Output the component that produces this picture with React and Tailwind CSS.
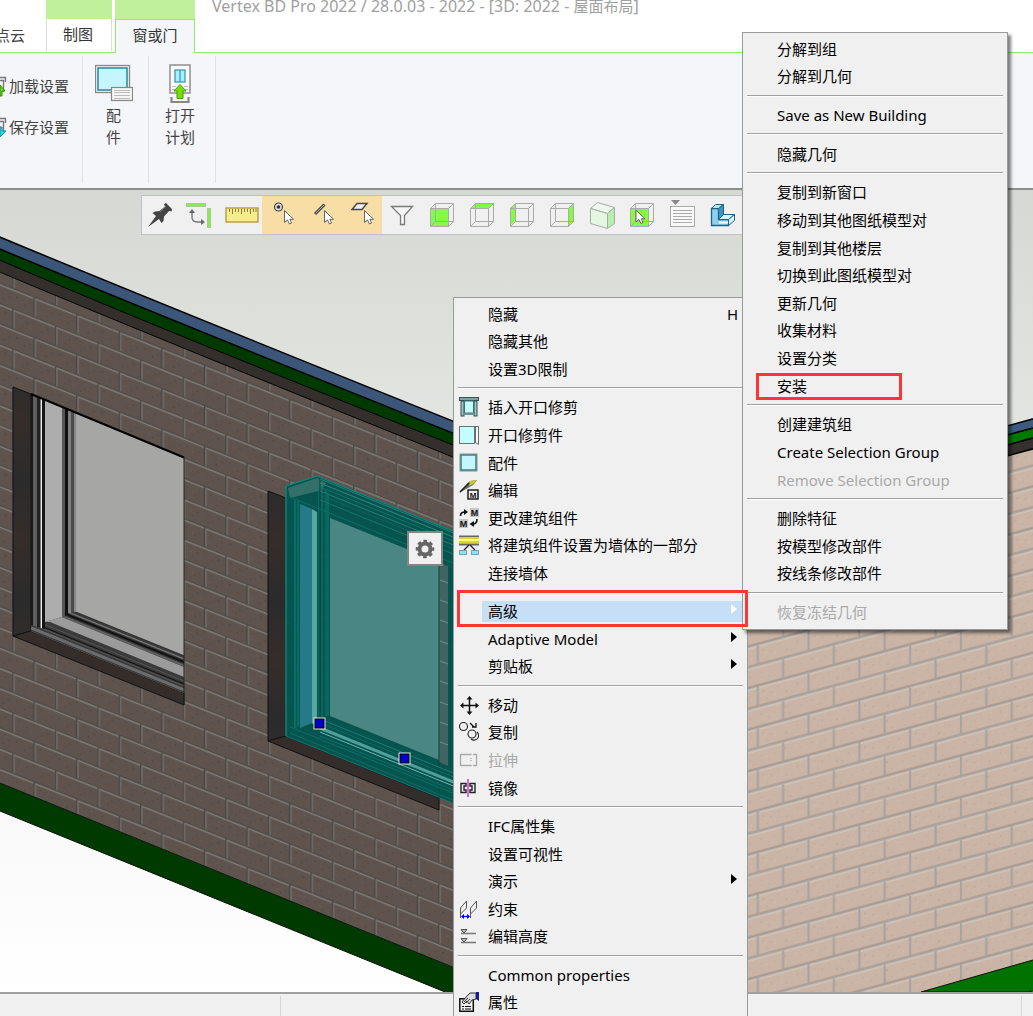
import React from 'react';
import clsx from 'clsx';

/* ---------- context menu icons, 20x20 ---------- */

const svg20 = { width: 20, height: 20, viewBox: '0 0 20 20', fill: 'none', 'aria-hidden': true };

const InsertTrimIcon = () => (
  <svg {...svg20}>
    <rect x="0.5" y="0.5" width="19" height="3" fill="#7fa3a3" stroke="#3d5353" />
    <rect x="2" y="4" width="3" height="15" fill="#9fc4c4" stroke="#2f4f4f" />
    <rect x="15" y="4" width="3" height="15" fill="#9fc4c4" stroke="#2f4f4f" />
    <rect x="5.5" y="4" width="9" height="12" fill="#c3fdff" stroke="#447070" />
    <rect x="5" y="16" width="10" height="2" fill="#6d9292" />
  </svg>
);

const TrimPartIcon = () => (
  <svg {...svg20}>
    <rect x="0.5" y="1.5" width="15" height="17" fill="#c3fdff" stroke="#6b7474" />
    <path d="M15.500 1.500H19.500V19.500L16.500 17.500V1.500" fill="#f8f8f8" stroke="#6b6b6b" />
  </svg>
);

const FittingIcon = () => (
  <svg {...svg20}>
    <rect x="1" y="1" width="17" height="17" fill="#c5f5ff" stroke="#7d9a9c" />
    <rect x="2" y="2" width="15" height="15" stroke="#3f7377" strokeWidth="1.4" />
  </svg>
);

const EditIcon = () => (
  <svg {...svg20}>
    <path d="M0 13L8 4L11 1L18 0L14 5L9 8Z" fill="#6e6e5c" />
    <path d="M11 1L18 0L14 4L10 6Z" fill="#c8c832" />
    <path d="M1 12L10 3" stroke="#222" strokeWidth="1.600" />
    <rect x="9" y="10" width="10" height="9" fill="#eee" stroke="#111" strokeWidth="1.400" />
    <text x="14" y="17.500" textAnchor="middle" fontSize="8" fontWeight="700" fontFamily="Liberation Sans, sans-serif" fill="#111">M</text>
  </svg>
);

const ChangeIcon = () => (
  <svg {...svg20}>
    <rect x="11" y="0" width="9" height="9" fill="#c6c6c6" />
    <rect x="0" y="11" width="9" height="9" fill="#c6c6c6" />
    <g fontSize="9" fontWeight="700" fontFamily="Liberation Sans, sans-serif" fill="#111" textAnchor="middle">
      <text x="15.500" y="7.500">M</text>
      <text x="4.500" y="18.500">M</text>
    </g>
    <path d="M1.500 8C1.500 5 3 4 6 4" stroke="#111" strokeWidth="1.600" />
    <path d="M5 1L9 4L5 7Z" fill="#111" />
    <path d="M18 11C18 14 17 16 14 16" stroke="#111" strokeWidth="1.600" />
    <path d="M15 13L10.500 16L15 19Z" fill="#111" />
  </svg>
);

const WallPartIcon = () => (
  <svg {...svg20}>
    <path d="M0 1.500H20M0 9.500H20" stroke="#666" strokeWidth="2" />
    <rect y="2" width="20" height="6" fill="#d8d43c" />
    <rect y="4" width="20" height="2" fill="#ffff6e" />
    <path d="M10 10L5 15M11 10L16 15" stroke="#222" strokeWidth="1.300" />
    <rect x="0.500" y="15.500" width="7" height="4" fill="#86e4f2" stroke="#6ba7b1" />
    <rect x="12.500" y="15.500" width="7" height="4" fill="#86e4f2" stroke="#6ba7b1" />
  </svg>
);

const MoveIcon = () => (
  <svg {...svg20}>
    <path d="M10.500 3V17M3 10.500H18" stroke="#111" strokeWidth="1.500" />
    <path d="M10.500 1L13.500 4.500H7.500ZM10.500 20L13.500 16.500H7.500ZM1 10.500L4.500 7.500V13.500ZM20 10.500L16.500 7.500V13.500Z" fill="#111" />
  </svg>
);

const CopyIcon = () => (
  <svg {...svg20}>
    <circle cx="4.500" cy="4.500" r="4" stroke="#222" strokeWidth="1.100" />
    <circle cx="13" cy="12" r="4" stroke="#222" strokeWidth="1.100" />
    <path d="M18 10A4.300 4.300 0 1 1 12 17" stroke="#222" strokeWidth="1.100" />
    <path d="M11 1L15 5M13 5H17V1" stroke="#111" strokeWidth="1.300" />
  </svg>
);

const StretchIcon = () => (
  <svg {...svg20}>
    <path d="M12 5V4.500H1.500V15.500H12V15" stroke="#aaa" strokeWidth="1.300" />
    <path d="M12 8V12" stroke="#aaa" strokeWidth="1.300" strokeDasharray="1 1" />
    <path d="M14 4.500H17.500V15.500H14" stroke="#aaa" strokeWidth="1.300" />
  </svg>
);

const MirrorIcon = () => (
  <svg {...svg20}>
    <path d="M7 5.500H2V14.500H7V12H5V8H7Z" stroke="#222" strokeWidth="1.400" />
    <path d="M11 5.500H16V14.500H11V12H13V8H11Z" stroke="#222" strokeWidth="1.400" />
    <path d="M9 1V19" stroke="#d61bd6" strokeWidth="1.300" />
  </svg>
);

const ConstraintIcon = () => (
  <svg {...svg20}>
    <path d="M1.500 9L7.500 2V9L1.500 15ZM11.500 9L17.500 2V9L11.500 15Z" stroke="#555" />
    <path d="M1.500 15V19M11.500 15V19" stroke="#555" />
    <path d="M3 17.500H10" stroke="#00f" strokeWidth="1.200" />
    <path d="M2 17.500L5 15V20ZM11 17.500L8 15V20Z" fill="#00f" />
  </svg>
);

const HeightIcon = () => (
  <svg {...svg20}>
    <path d="M2 7.500H17M2 16.500H17" stroke="#777" strokeWidth="1.400" />
    <path d="M2 3.500H8L5 7ZM2 12.500H8L5 16Z" stroke="#555" fill="#bbb" />
  </svg>
);

const PropertiesIcon = () => (
  <svg {...svg20}>
    <rect x="0.800" y="6.800" width="13.500" height="12.500" fill="#eee" stroke="#111" strokeWidth="1.500" />
    <path d="M3 14.500H5M6 14.500H12M3 17H5M6 17H12" stroke="#111" />
    <path d="M3 10L8 4L11 1H17V7L13 8L10 12L8 9L5 12Z" fill="#ddd" stroke="#333" />
    <path d="M5 10L9 6M7 11L11 7" stroke="#333" />
    <path d="M17 0H20V9L17 7Z" fill="#1a1a8c" />
  </svg>
);

const contextItems = [
  { label: '隐藏', shortcut: 'H' },
  { label: '隐藏其他' },
  { label: '设置3D限制' },
  null,
  { label: '插入开口修剪', Icon: InsertTrimIcon },
  { label: '开口修剪件', Icon: TrimPartIcon },
  { label: '配件', Icon: FittingIcon },
  { label: '编辑', Icon: EditIcon },
  { label: '更改建筑组件', Icon: ChangeIcon },
  { label: '将建筑组件设置为墙体的一部分', Icon: WallPartIcon },
  { label: '连接墙体' },
  null,
  { label: '高级', submenu: true, active: true },
  { label: 'Adaptive Model', submenu: true },
  { label: '剪贴板', submenu: true },
  null,
  { label: '移动', Icon: MoveIcon },
  { label: '复制', Icon: CopyIcon },
  { label: '拉伸', Icon: StretchIcon, disabled: true },
  { label: '镜像', Icon: MirrorIcon },
  null,
  { label: 'IFC属性集' },
  { label: '设置可视性' },
  { label: '演示', submenu: true },
  { label: '约束', Icon: ConstraintIcon },
  { label: '编辑高度', Icon: HeightIcon },
  null,
  { label: 'Common properties' },
  { label: '属性', Icon: PropertiesIcon },
];

const advancedItems = [
  { label: '分解到组' },
  { label: '分解到几何' },
  null,
  { label: 'Save as New Building' },
  null,
  { label: '隐藏几何' },
  null,
  { label: '复制到新窗口' },
  { label: '移动到其他图纸模型对' },
  { label: '复制到其他楼层' },
  { label: '切换到此图纸模型对' },
  { label: '更新几何' },
  { label: '收集材料' },
  { label: '设置分类' },
  { label: '安装' },
  null,
  { label: '创建建筑组' },
  { label: 'Create Selection Group' },
  { label: 'Remove Selection Group', disabled: true },
  null,
  { label: '删除特征' },
  { label: '按模型修改部件' },
  { label: '按线条修改部件' },
  null,
  { label: '恢复冻结几何', disabled: true },
];

function Separator() {
  return (
    <li role="separator" className="flex h-[11px] shrink-0 items-center px-1">
      <span className="h-[2px] w-full border-t border-[#a0a0a0] bg-white" />
    </li>
  );
}

function MenuItem({ item }) {
  const { label, Icon, shortcut, submenu, active, disabled } = item;
  return (
    <li role="none" className="min-h-0 flex-1">
      <button
        role="menuitem"
        disabled={disabled}
        className={clsx('flex h-full w-full items-center pl-[5px] text-left', disabled ? 'text-[#a9a9a9]' : 'text-black')}
      >
        <span className="w-5 shrink-0">{Icon && <Icon />}</span>
        <span className={clsx('ml-[3px] flex h-[21px] flex-1 items-center pl-[6px] pr-[9px]', active && 'bg-[#c5dff7]')}>
          <span className="flex-1 whitespace-nowrap">{label}</span>
          {shortcut && <span>{shortcut}</span>}
          {submenu && (
            <svg width="7" height="14" viewBox="0 0 7 14" aria-hidden="true">
              <path d="M0 0L6 5L0 10Z" fill={active ? '#fff' : '#000'} />
            </svg>
          )}
        </span>
      </button>
    </li>
  );
}

function ContextMenu() {
  return (
    <div className="absolute left-[453px] top-[297px] w-[295px] border border-[#9a9a9a] bg-[#f0f0f0] pt-[2px]">
      <ul role="menu" className="flex h-[716px] flex-col">
        {contextItems.map((item, i) => (item ? <MenuItem key={item.label} item={item} /> : <Separator key={i} />))}
      </ul>
    </div>
  );
}

function AdvancedMenu() {
  return (
    <div className="absolute left-[742px] top-[32px] w-[266px] border border-[#9a9a9a] bg-[#f0f0f0] pt-[2px] pb-[3px] shadow-[3px_3px_3px_rgba(0,0,0,0.5)]">
      <ul role="menu" className="flex h-[591px] flex-col">
        {advancedItems.map((item, i) => (item ? <MenuItem key={item.label} item={item} /> : <Separator key={i} />))}
      </ul>
    </div>
  );
}

/* ---------- floating view toolbar ---------- */

const svg32 = { width: 32, height: 32, viewBox: '0 0 32 32', fill: 'none', 'aria-hidden': true };

const Cursor = ({ x, y }) => (
  <path
    transform={`translate(${x} ${y})`}
    d="M0 0V12L3 9.500L5 13.500L7 12.500L5.300 8.800H9Z"
    fill="#fff"
    stroke="#666"
  />
);

const PinIcon = () => (
  <svg {...svg32}>
    <path d="M2 29L10 18L6.500 15L9 13.500L13.500 13L19 8.500L18 6L20 5L26 11L25.500 13.500L23 13L18 18.500L17.500 23L15.500 25L13 21Z" fill="#444" />
    <path d="M20 8L14 14" stroke="#777" />
  </svg>
);

const AxesIcon = () => (
  <svg {...svg32}>
    <rect x="0.500" y="5.500" width="19" height="3" fill="#84f04a" stroke="#a9c79b" />
    <rect x="21.500" y="10.500" width="3" height="19" fill="#84f04a" stroke="#a9c79b" />
    <path d="M6 14V19C6 22 8 24 11 24H15" stroke="#777" strokeWidth="1.400" />
    <path d="M6 11L9 15H3ZM19 24L15 21V27Z" fill="#666" />
  </svg>
);

const RulerIcon = () => (
  <svg width="34" height="32" viewBox="0 0 34 32" fill="none" aria-hidden="true">
    <rect x="1" y="10" width="32" height="14" fill="#f6ee8b" stroke="#b39339" strokeWidth="1.300" />
    <path d="M4.500 11V14M7.500 11V16M10.500 11V14M13.500 11V14M16.500 11V16M19.500 11V14M22.500 11V14M25.500 11V16M28.500 11V14M31 11V14" stroke="#8c7a3a" />
  </svg>
);

const SnapPointIcon = () => (
  <svg {...svg32}>
    <circle cx="12.500" cy="9" r="4" fill="#ddd" stroke="#444" strokeWidth="1.200" />
    <circle cx="12.500" cy="9" r="1.800" fill="#333" />
    <Cursor x={18.5} y={12.5} />
  </svg>
);

const SnapLineIcon = () => (
  <svg {...svg32}>
    <path d="M9 16L18.500 6.500" stroke="#444" strokeWidth="3" />
    <path d="M9.500 15.500L18 7" stroke="#bbb" />
    <Cursor x={18.5} y={12.5} />
  </svg>
);

const SnapPlaneIcon = () => (
  <svg {...svg32}>
    <path d="M6 11.500L11 5.500H21L16 11.500Z" fill="#f2f2f2" stroke="#444" strokeWidth="1.400" />
    <Cursor x={18.5} y={12.5} />
  </svg>
);

const FilterIcon = () => (
  <svg {...svg32}>
    <path d="M5.500 8.500H26.500L18.500 17.500V26.500H14.500V17.500Z" fill="#f6f6f6" stroke="#7a7a7a" strokeWidth="1.300" />
  </svg>
);

const cubeFaces = {
  front: 'M5 11H23V28H5Z',
  top: 'M5 10L10 5H28L23 10Z',
  left: 'M4 10L9 6V23L4 28Z',
  right: 'M23 10L28 6V23L23 28Z',
};

function CubeIcon({ face, cursor }) {
  return (
    <svg {...svg32}>
      <path d={cubeFaces[face]} fill="#84fb40" />
      <path d="M4.500 10.500H22.500V28.500H4.500ZM9.500 5.500H27.500V23.500H9.500ZM4.500 10.500L9.500 5.500M22.500 10.500L27.500 5.500M22.500 28.500L27.500 23.500M4.500 28.500L9.500 23.500" stroke="#aaa" />
      {cursor && <Cursor x={10} y={12} />}
    </svg>
  );
}

const FrontCube = () => <CubeIcon face="front" />;
const TopCube = () => <CubeIcon face="top" />;
const LeftCube = () => <CubeIcon face="left" />;
const RightCube = () => <CubeIcon face="right" />;
const PickCube = () => <CubeIcon face="front" cursor />;

const IsoCube = () => (
  <svg {...svg32}>
    <path d="M4.500 10.500L11.500 4.500L28.500 9.500L21.500 15.500Z" fill="#eef8ec" stroke="#aaa" />
    <path d="M4.500 10.500L21.500 15.500V30.500L4.500 25.500Z" fill="#e4f7e0" stroke="#aaa" />
    <path d="M21.500 15.500L28.500 9.500V25.500L21.500 30.500Z" fill="#b7f0ac" stroke="#aaa" />
  </svg>
);

const ListIcon = () => (
  <svg {...svg32}>
    <path d="M5 2H14L9.500 7Z" fill="#888" />
    <rect x="4.500" y="8.500" width="24" height="20" fill="#f8f8f8" stroke="#aaa" />
    <path d="M7 12.500H26M7 15.500H26M7 18.500H26M7 21.500H26M7 24.500H26" stroke="#aaa" />
  </svg>
);

const ShapeIcon = () => (
  <svg {...svg32}>
    <path d="M5.500 10.500H12.500V21.500H22.500V27.500H5.500Z" fill="#8fd0ee" stroke="#1f6285" strokeWidth="1.300" />
    <path d="M5.500 10.500L9.500 6.500H17.500L12.500 10.500Z" fill="#b8e4f6" stroke="#1f6285" />
    <path d="M12.500 10.500L17.500 6.500V17.500L12.500 21.500Z" fill="#3f94bd" stroke="#1f6285" />
    <path d="M12.500 21.500L17.500 16.500H28.500L22.500 21.500Z" fill="#d8f1fb" stroke="#1f6285" />
    <path d="M22.500 21.500L28.500 16.500V22.500L22.500 27.500Z" fill="#d8f1fb" stroke="#1f6285" />
    <path d="M13 24.500H22" stroke="#fff" strokeWidth="2" />
  </svg>
);

const viewTools = [
  { name: 'Pin', Icon: PinIcon },
  { name: 'Axes', Icon: AxesIcon },
  { name: 'Measure', Icon: RulerIcon },
  { name: 'Point', Icon: SnapPointIcon, on: true },
  { name: 'Line', Icon: SnapLineIcon, on: true },
  { name: 'Plane', Icon: SnapPlaneIcon, on: true },
  { name: 'Filter', Icon: FilterIcon },
  { name: 'Front', Icon: FrontCube },
  { name: 'Top', Icon: TopCube },
  { name: 'Left', Icon: LeftCube },
  { name: 'Right', Icon: RightCube },
  { name: 'Isometric', Icon: IsoCube },
  { name: 'Pick face', Icon: PickCube },
  { name: 'List', Icon: ListIcon },
  { name: 'Solid', Icon: ShapeIcon },
];

function ViewToolbar() {
  return (
    <div className="absolute left-[141px] top-[5px] flex h-10 border border-[#bfc1c4] bg-[#f0f0f0]">
      {viewTools.map(({ name, Icon, on }) => (
        <button key={name} aria-label={name} className={clsx('flex w-10 items-center justify-center pb-[2px]', on && 'bg-[#f8dda4]')}>
          <Icon />
        </button>
      ))}
    </div>
  );
}

/* ---------- 3D view ---------- */

// One stripe per line, all running parallel between two x positions
function Stripes({ lines, x1, x2, slope }) {
  return lines.map(([y, color, w]) => (
    <path key={y} d={`M${x1} ${y}L${x2} ${y + (x2 - x1) * slope}`} stroke={color} strokeWidth={w} />
  ));
}

function Posts({ posts, y1, y2, slope }) {
  return posts.map(([x, w, color]) => {
    const d = (x - posts[0][0]) * slope;
    const e = d + w * slope;
    return <path key={x} d={`M${x} ${y1 + d}L${x + w} ${y1 + e}V${y2 + e}L${x} ${y2 + d}Z`} fill={color} />;
  });
}

function Scene() {
  return (
    <svg className="absolute inset-0 h-full w-full" viewBox="0 190 1033 802" preserveAspectRatio="xMinYMin slice" fill="none" aria-hidden="true">
      <defs>
        <linearGradient id="sky" x1="0" y1="0" x2="0" y2="1">
          <stop offset="0" stopColor="#d6d8d3" />
          <stop offset="0.250" stopColor="#e1e3df" />
          <stop offset="0.800" stopColor="#f9f9f9" />
          <stop offset="1" stopColor="#fff" />
        </linearGradient>
        <linearGradient id="reveal" x1="0" y1="0" x2="0" y2="60" gradientUnits="userSpaceOnUse" spreadMethod="reflect">
          <stop offset="0" stopColor="#2b2b2b" />
          <stop offset="1" stopColor="#352d29" />
        </linearGradient>
        <pattern id="darkBrick" width="42.600" height="40.400" patternUnits="userSpaceOnUse" patternTransform="matrix(1 0.400 0 1 12.300 308)">
          <rect width="42.600" height="40.400" fill="#5e534d" />
          <path d="M6 6h1M14 9h1.500M21 5h1M29 12h1M35 8h1.500M10 14h1M25 15h1M4 28h1.500M12 33h1M28 27h1M33 35h1.500M39 30h1M17 29h1" stroke="#4c433e" />
          <path d="M8 10h1M18 13h1M31 6h1M9 31h1M26 34h1M36 27h1" stroke="#6c615a" />
          <path d="M0 0.700H42.600M0 20.900H42.600" stroke="#4d4a47" strokeWidth="2" />
          <path d="M0 2H42.600M0 22.200H42.600" stroke="#857e79" strokeWidth="1.300" />
          <path d="M0.600 1V20M21.900 21V40" stroke="#484644" strokeWidth="1.600" />
          <path d="M1.900 2V20M23.200 22V40" stroke="#77716c" strokeWidth="1.200" />
        </pattern>
        <pattern id="lightBrick" width="50.800" height="41.600" patternUnits="userSpaceOnUse" patternTransform="matrix(1 -0.270 0 1 756.700 894.300)">
          <rect width="50.800" height="41.600" fill="#c9b4a6" />
          <path d="M6 7h1.500M14 10h1.500M21 6h1M29 13h1.500M40 8h1.500M10 15h1M35 15h1M4 29h1.500M12 34h1M28 28h1.500M33 36h1.500M44 31h1M17 30h1" stroke="#b7a193" />
          <path d="M8 10h1M18 13h1M31 6h1M45 13h1M9 31h1M26 34h1M39 28h1" stroke="#d8c6ba" />
          <path d="M0 40.800H50.800M0 20H50.800" stroke="#9b8e86" strokeWidth="1.200" />
          <path d="M0 0.500H50.800M0 21.300H50.800" stroke="#aeaaa5" strokeWidth="1.800" />
          <path d="M0 2H50.800M0 22.800H50.800" stroke="#dccfc5" />
          <path d="M1 1V20M26.400 22V41" stroke="#a8a39f" strokeWidth="2.200" />
        </pattern>
      </defs>

      <rect y="190" width="1033" height="802" fill="url(#sky)" />

      {/* left wall with fascia and roof edge */}
      <path d="M-5 270L600 516V1027L-5 781Z" fill="url(#darkBrick)" />
      <path d="M-5 781L600 1027V1055L-5 809Z" fill="#003a00" stroke="#0b120b" />
      <path d="M-5 258Q170 332 600 502V516Q170 344 -5 270Z" fill="#352f2c" stroke="#000" />
      <path d="M-5 247Q170 319 600 492V503Q170 334 -5 258Z" fill="#003a00" stroke="#000" />
      <path d="M-5 235Q170 308 600 480V492Q170 320 -5 247Z" fill="#3c5679" stroke="#000" strokeWidth="1.500" />

      {/* right wall */}
      <path d="M748 529L1040 447V992H748Z" fill="url(#lightBrick)" />
      <path d="M921 992L1040 958V990L1027 992Z" fill="#007200" stroke="#111" />
      <path d="M748 526L1040 447V436L748 515Z" fill="#352f2d" stroke="#000" strokeWidth="1.500" />
      <path d="M748 515L1040 436V426L748 506Z" fill="#007800" stroke="#000" strokeWidth="1.500" />
      <path d="M748 506L1040 426V417L748 496Z" fill="#3e5a80" stroke="#000" strokeWidth="1.500" />

      {/* plain window */}
      <path d="M13 387L31 394V631L13 636Z" fill="url(#reveal)" stroke="#111" />
      <path d="M13 636L31 631L184 693V705Z" fill="#352d29" stroke="#111" />
      <path d="M31 394L184 457V693L31 631Z" fill="#a6a6a4" />
      <clipPath id="opening1">
        <path d="M31 394L184 457V693L31 631Z" />
      </clipPath>
      <g clipPath="url(#opening1)">
        <path d="M31 594L184 656V700L31 632Z" fill="#3a3a3a" />
        <path d="M45 622L62 617L184 667V677L50 622Z" fill="#9b9b9b" />
        <Stripes
          x1={31}
          x2={184}
          slope={0.405}
          lines={[
            [594, '#333', 1.2],
            [597, '#777', 1.2],
            [600, '#111', 2],
            [603.5, '#606060', 2],
            [619, '#555', 1],
            [622, '#111', 1],
            [624, '#555', 1],
            [628, '#6c6c6c', 3],
          ]}
        />
        <Posts
          y1={380}
          y2={625}
          slope={0.3}
          posts={[
            [31, 2, '#1a1a1a'],
            [33, 4, '#5e5e5e'],
            [37, 3, '#222'],
            [40, 1, '#777'],
            [41, 1, '#eee'],
            [42, 3, '#151515'],
          ]}
        />
        <path d="M45 380H62V617L45 622Z" fill="#adadad" />
        <path d="M62 380H65V617H62Z" fill="#555" />
        <path d="M65 380H68V614L65 616Z" fill="#111" />
        <path d="M68 380H71V613H68Z" fill="#808080" />
        <path d="M71 380H74V612H71Z" fill="#4b4b4b" />
        <path d="M74 380H76V612H74Z" fill="#868686" />
      </g>
      <path d="M31 394L184 457.500" stroke="#000" strokeWidth="2" />
      <path d="M184 457V705" stroke="#222" />

      {/* selected window */}
      <path d="M268 491L286 498V736L268 741Z" fill="url(#reveal)" stroke="#111" />
      <path d="M268 741L286 736L439 798V810Z" fill="#352d29" stroke="#111" />
      <path d="M286 486L317 476L560 574V846L286 736Z" fill="#00544f" fillOpacity="0.940" stroke="#127872" />
      <path d="M288 488L317 478L326 483L322 490L290 498Z" fill="#33706b" />
      <path d="M300 504L312 509V723L300 728Z" fill="#257a88" />
      <path d="M312 509L317 512V722L312 724Z" fill="#58a5a1" />
      <path d="M330 518L439 562V760L330 716Z" fill="#4a8683" />
      <path d="M439 562L448 566V766L439 762Z" fill="#3f6461" />
      <path d="M440 580L448 583M440 600L448 603M440 620L448 623M440 641L448 644M440 661L448 664M440 681L448 684M440 702L448 705M440 722L448 725M440 742L448 745" stroke="#70908d" />
      <path d="M439 562V800" stroke="#17423f" />
      <path d="M295 500V728M298 501V727" stroke="#0f8480" />
      <path d="M319 486V724M322 486V722M326 489V716M328 494V716" stroke="#0e7a75" />
      <path d="M320 478V720" stroke="#003f3c" />
      <Stripes
        x1={320}
        x2={460}
        slope={0.405}
        lines={[
          [479, '#2a7d78', 1],
          [483, '#2f807b', 1.2],
          [487, '#0f736e', 1],
          [491, '#2a7d78', 1],
          [495, '#10635e', 1],
          [500, '#187570', 1],
          [719, '#1b7d77', 1],
          [723, '#126a65', 1],
          [728, '#4f9f9a', 3],
          [732, '#6fb5b0', 1],
          [736, '#0e6f6a', 1],
        ]}
      />
      <path d="M290 497L460 566M290 727L460 796M290 733L460 803" stroke="#0d6f69" />
      <path d="M286 486L317 476L460 534M286 486V736" stroke="#168680" />

      {/* drag handles */}
      {[[320, 724], [405, 759]].map(([x, y]) => (
        <g key={x}>
          <rect x={x - 6.5} y={y - 6.5} width="12" height="12" fill="#dfe6df" />
          <rect x={x - 5} y={y - 5} width="9" height="9" fill="#0000c8" stroke="#000" />
        </g>
      ))}
    </svg>
  );
}

const GearIcon = () => (
  <svg width="20" height="20" viewBox="0 0 20 20" fill="none" aria-hidden="true">
    <circle cx="10" cy="10" r="5.500" stroke="#666" strokeWidth="4" />
    <circle cx="10" cy="10" r="8" stroke="#666" strokeWidth="2.600" strokeDasharray="3.600 2.683" strokeDashoffset="1.800" />
  </svg>
);

/* ---------- ribbon ---------- */

const SettingsSlice = ({ down }) => (
  <svg width="9" height="24" viewBox="0 0 9 24" fill="none" aria-hidden="true">
    <path d="M0 3.500H5.500V8M0 6.500H3.500V18" stroke="#777" strokeWidth="1.400" />
    {down ? <path d="M0 12H2V16H6L0 22Z" fill="#35dbe8" stroke="#178894" /> : <path d="M0 11L5 17H2V22H0Z" fill="#6ddb10" stroke="#3c8a06" />}
  </svg>
);

const FittingsIcon = () => (
  <svg width="38" height="38" viewBox="0 0 38 38" fill="none" aria-hidden="true">
    <rect x="0.500" y="1.500" width="34" height="27" fill="#f3f3f3" stroke="#888" strokeWidth="1.300" />
    <rect x="3" y="4" width="29" height="22" fill="#c5f5ff" stroke="#27889a" strokeWidth="1.500" />
    <rect x="16.500" y="23.500" width="21" height="13" fill="#f6f6f6" stroke="#888" strokeWidth="1.200" />
    <path d="M19 26.500H35M19 28.500H35M19 31.500H35M19 34.500H35" stroke="#bbb" />
  </svg>
);

const OpenPlanIcon = () => (
  <svg width="22" height="40" viewBox="0 0 22 40" fill="none" aria-hidden="true">
    <rect x="1" y="1" width="20" height="28" fill="#fafafa" stroke="#888" strokeWidth="1.400" />
    <rect x="6" y="6" width="10" height="12" fill="#a8f0fc" stroke="#2f96a8" strokeWidth="1.200" />
    <path d="M11 6V18" stroke="#2f96a8" strokeWidth="1.200" />
    <path d="M3 22.500H7M3 25.500H7M15 22.500H19M15 25.500H19" stroke="#bbb" />
    <path d="M2.500 33V38H19.500V33" stroke="#888" strokeWidth="2.200" />
    <path d="M11 20.500L17 27H14V34.500H8V27H5Z" fill="#76de00" stroke="#4b9e05" />
  </svg>
);

function Ribbon() {
  return (
    <div className="flex h-[137px] shrink-0 border-b-2 border-[#8c8f8c] bg-[#f5f6f9] pt-[3px] pb-[5px] text-[#444]">
      <div className="w-[83px] border-r border-[#dfe1e4] pt-[9px]">
        <button className="flex h-[41px] items-center whitespace-nowrap">
          <SettingsSlice />
          加载设置
        </button>
        <button className="flex h-[41px] items-center whitespace-nowrap">
          <SettingsSlice down />
          保存设置
        </button>
      </div>
      <div className="flex w-[66px] justify-center border-r border-[#dfe1e4] pr-1">
        <button className="flex flex-col items-center pt-2 leading-[22px]">
          <span className="flex h-10"><FittingsIcon /></span>
          <span>配<br />件</span>
        </button>
      </div>
      <div className="flex w-[67px] justify-center border-r border-[#dfe1e4] pr-1">
        <button className="flex flex-col items-center pt-2 leading-[22px]">
          <span className="flex h-10"><OpenPlanIcon /></span>
          <span>打开<br />计划</span>
        </button>
      </div>
    </div>
  );
}

function Header() {
  return (
    <header className="flex h-[53px] shrink-0 border-b border-[#92ee60] bg-white">
      <button className="mt-5 flex h-8 w-[46px] items-center justify-end whitespace-nowrap pr-[21px] pb-[3px] text-[#444]">点云</button>
      <div className="mr-[3px] w-[66px] border-t-[19px] border-[#c1f09d]">
        <button className="flex h-8 w-full items-center justify-center border-x border-[#dcdcdc] pr-[2px] pb-[2px] text-[#333]">制图</button>
      </div>
      <div className="-mb-px w-20 border-t-[19px] border-[#c1f09d]">
        <button className="flex h-[34px] w-full items-center justify-center border-x border-t border-[#92ee60] bg-[#f5f6f9] pb-1 text-[#333]">窗或门</button>
      </div>
      <h1 className="ml-[17px] h-3 whitespace-nowrap text-base leading-3 text-[#a0a0a0]">
        Vertex BD Pro 2022 / 28.0.03 - 2022 - [3D: 2022 - <span className="text-[15px]">屋面布局</span>]
      </h1>
    </header>
  );
}

export default function App() {
  return (
    <div className="relative flex h-screen flex-col overflow-hidden bg-white font-['Noto_Sans','Noto_Sans_CJK_SC',sans-serif] text-[15px] leading-5">
      <Header />
      <Ribbon />
      <main className="relative flex-1 overflow-hidden">
        <Scene />
        <ViewToolbar />
        <button aria-label="设置" className="absolute left-[407px] top-[341px] flex h-[35px] w-9 items-center justify-center border-2 border-[#858585] bg-[#f0f0f0]">
          <GearIcon />
        </button>
      </main>
      <footer className="flex h-6 shrink-0 border-t-2 border-[#a0a0a0] bg-[#f0f0f0] pt-[2px]">
        <span className="w-[281px] border-r border-[#d5d5d5]" />
        <span className="mr-[11px] flex-1 border-r border-[#d5d5d5]" />
      </footer>

      <ContextMenu />
      <AdvancedMenu />

      {/* highlight frames */}
      <div className="pointer-events-none absolute left-[457px] top-[590px] h-[37px] w-[291px] border-3 border-[#fb3636]" />
      <div className="pointer-events-none absolute left-[756px] top-[373px] h-[27px] w-[146px] border-3 border-[#fb3636]" />
    </div>
  );
}
